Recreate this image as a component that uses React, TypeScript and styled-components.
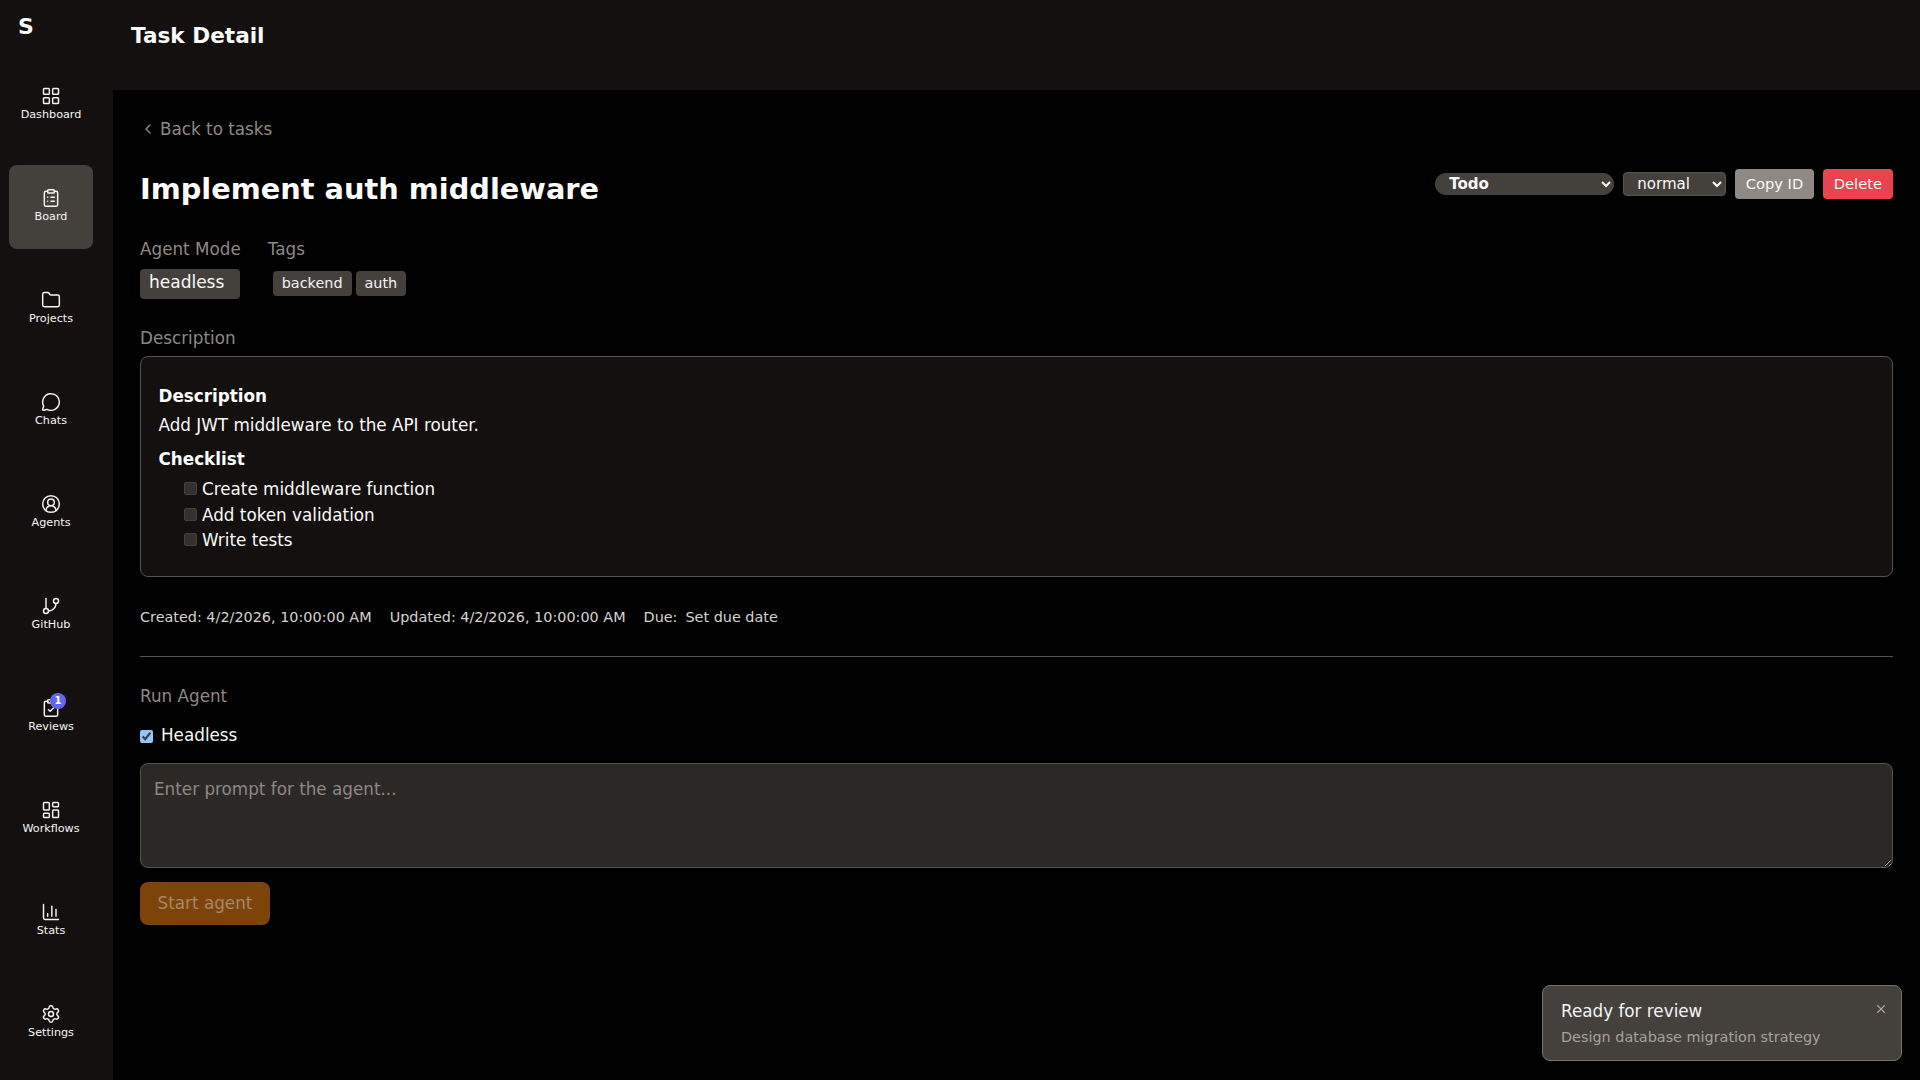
import React from 'react';
import styled, { createGlobalStyle } from 'styled-components';
import {
  LayoutGrid, ClipboardList, Folder, MessageCircle, CircleUserRound, GitBranch,
  ClipboardCheck, LayoutDashboard, ChartColumn, Settings, ChevronLeft, X,
} from 'lucide-react';

const Global = createGlobalStyle`
  html, body { margin: 0; padding: 0; height: 100%; background: #000; }
  body { font-family: "DejaVu Sans", sans-serif; color: #fafaf9; overflow: hidden; }
  * { box-sizing: border-box; }
`;

const Shell = styled.div`
  display: flex;
  height: 100vh;
`;
const Sidebar = styled.nav`
  width: 113px;
  flex: none;
  background: #141010;
  display: flex;
  flex-direction: column;
  padding-left: 9px;
`;
const Logo = styled.div`
  height: 63px;
  padding: 14px 0 0 9px;
  font-size: 22px;
  line-height: 26px;
  font-weight: 700;
`;
const NavList = styled.div`
  display: flex;
  flex-direction: column;
  gap: 18px;
`;
const NavItem = styled.a<{ $active?: boolean }>`
  position: relative;
  width: 84px;
  height: 84px;
  border-radius: 8px;
  display: flex;
  flex-direction: column;
  align-items: center;
  padding-top: 23px;
  background: ${p => (p.$active ? '#44403c' : 'transparent')};
  color: #f5f5f4;
  font-size: 11.2px;
  line-height: 14px;
  gap: 2px;
  svg { display: block; }
`;
const IconWrap = styled.span`
  position: relative;
  display: block;
  width: 20px;
  height: 20px;
`;
const Badge = styled.span`
  position: absolute;
  top: -5px;
  left: 9px;
  width: 16px;
  height: 16px;
  border-radius: 50%;
  background: #6366f1;
  color: #fff;
  font-size: 10px;
  font-weight: 700;
  line-height: 16px;
  text-align: center;
`;
const Column = styled.div`
  flex: 1;
  min-width: 0;
  display: flex;
  flex-direction: column;
`;
const Header = styled.header`
  height: 90px;
  flex: none;
  background: #141010;
  padding: 22px 0 0 18px;
  font-size: 21.6px;
  line-height: 28px;
  font-weight: 700;
`;
const Content = styled.main`
  flex: 1;
  background: #000;
  padding: 28px 27px 0;
`;
const BackLink = styled.a`
  display: flex;
  align-items: center;
  gap: 4px;
  height: 22px;
  color: #8f8986;
  font-size: 16.8px;
  line-height: 22px;
`;
const TitleRow = styled.div`
  display: flex;
  justify-content: space-between;
  align-items: flex-start;
  margin-top: 29px;
`;
const Title = styled.h1`
  margin: 0;
  font-size: 28.8px;
  line-height: 40px;
  font-weight: 700;
  color: #fff;
`;
const Actions = styled.div`
  display: flex;
  align-items: center;
  gap: 9px;
  height: 30px;
`;
const StatusSelect = styled.select`
  width: 179px;
  height: 22px;
  border: none;
  border-radius: 11px;
  background: #44403c;
  color: #fafaf9;
  font: 700 15.1px "DejaVu Sans", sans-serif;
  padding: 0 10px;
`;
const PrioritySelect = styled.select`
  width: 103px;
  height: 24px;
  border: 1px solid #57534e;
  border-radius: 4px;
  background: #44403c;
  color: #fafaf9;
  font: 15.1px "DejaVu Sans", sans-serif;
  padding: 0 9px;
`;
const ActionButton = styled.button<{ $danger?: boolean }>`
  height: 30px;
  padding: 0 ${p => (p.$danger ? '11px' : '10.5px')} 1px;
  border: none;
  border-radius: 4px;
  background: ${p => (p.$danger ? '#e94350' : '#8f8986')};
  color: #fafaf9;
  font: 14.7px "DejaVu Sans", sans-serif;
`;
const MetaRow = styled.div`
  display: flex;
  gap: 27px;
  margin-top: 29px;
`;
const Field = styled.div`
  display: flex;
  flex-direction: column;
`;
const FieldLabel = styled.div`
  color: #8f8986;
  font-size: 16.8px;
  line-height: 22px;
`;
const ModeBadge = styled.div`
  width: 100px;
  height: 30px;
  margin-top: 9px;
  padding-left: 9px;
  border-radius: 4px;
  background: #44403c;
  color: #fafaf9;
  font-size: 17px;
  line-height: 26px;
`;
const TagRow = styled.div`
  display: flex;
  gap: 4px;
  margin: 11px 0 0 5px;
`;
const Tag = styled.span`
  height: 25px;
  padding: 0 9px;
  border-radius: 4px;
  background: #44403c;
  color: #f5f5f4;
  font-size: 14.4px;
  line-height: 25px;
`;
const SectionLabel = styled(FieldLabel)`
  margin-top: 28px;
`;
const Card = styled.section`
  margin-top: 7px;
  height: 221px;
  padding: 26px 17.5px 0;
  border: 1px solid #57534e;
  border-radius: 8px;
  background: #141010;
`;
const CardHeading = styled.h3`
  margin: 0;
  font-size: 16.8px;
  line-height: 26px;
  font-weight: 700;
  color: #fff;
`;
const CardText = styled.p`
  margin: 3px 0 8px;
  font-size: 16.8px;
  line-height: 26px;
  color: #fafaf9;
`;
const Checklist = styled.ul`
  margin: 4.3px 0 0;
  padding: 0 0 0 25.5px;
  list-style: none;
`;
const CheckItem = styled.li`
  display: flex;
  align-items: center;
  gap: 5px;
  font-size: 16.8px;
  height: 25.5px;
  color: #fafaf9;
`;
const CheckBox = styled.span`
  width: 13px;
  height: 13px;
  margin-top: -1px;
  border-radius: 2px;
  background: #353130;
  border: 1px solid #44403c;
`;
const Timestamps = styled.div`
  display: flex;
  gap: 18px;
  margin-top: 30px;
  color: #d6d3d1;
  font-size: 14.4px;
  line-height: 20px;
`;
const DueValue = styled.span`
  margin-left: 8px;
`;
const Divider = styled.hr`
  margin: 29px 0 0;
  border: none;
  border-top: 1px solid #57534e;
`;
const RunLabel = styled(FieldLabel)`
  margin-top: 28px;
`;
const HeadlessRow = styled.label`
  display: flex;
  align-items: center;
  gap: 8px;
  margin-top: 17px;
  font-size: 16.8px;
  line-height: 22px;
  color: #fafaf9;
`;
const HeadlessBox = styled.input`
  width: 13px;
  height: 13px;
  margin: 2px 0 0;
  accent-color: #93c5fd;
`;
const Prompt = styled.textarea`
  display: block;
  width: 100%;
  height: 105px;
  margin-top: 17px;
  padding: 14px 13px;
  border: 1px solid #57534e;
  border-radius: 8px;
  background: #2c2826;
  color: #fafaf9;
  font: 16.8px/22px "DejaVu Sans", sans-serif;
  &::placeholder { color: #8f8986; }
`;
const StartButton = styled.button`
  display: block;
  width: 130px;
  height: 43px;
  margin-top: 14px;
  padding: 0 0 2px;
  border: none;
  border-radius: 8px;
  background: #7c4409;
  color: #a8866a;
  font: 16.8px "DejaVu Sans", sans-serif;
`;
const Toast = styled.aside`
  position: fixed;
  right: 18px;
  bottom: 19px;
  width: 360px;
  height: 76px;
  padding: 14px 18px;
  border: 1px solid #78716c;
  border-radius: 8px;
  background: #44403c;
`;
const ToastTitle = styled.div`
  font-size: 16.8px;
  line-height: 22px;
  color: #f5f5f4;
`;
const ToastText = styled.div`
  margin-top: 6px;
  font-size: 14.4px;
  line-height: 18px;
  color: #a8a29e;
`;
const ToastClose = styled.span`
  position: absolute;
  top: 16px;
  right: 13px;
  display: block;
  color: #a8a29e;
  line-height: 0;
`;

const navItems = [
  { label: 'Dashboard', Icon: LayoutGrid },
  { label: 'Board', Icon: ClipboardList, active: true },
  { label: 'Projects', Icon: Folder },
  { label: 'Chats', Icon: MessageCircle },
  { label: 'Agents', Icon: CircleUserRound },
  { label: 'GitHub', Icon: GitBranch },
  { label: 'Reviews', Icon: ClipboardCheck, badge: 1 },
  { label: 'Workflows', Icon: LayoutDashboard },
  { label: 'Stats', Icon: ChartColumn },
  { label: 'Settings', Icon: Settings },
];

export default function App() {
  return (
    <Shell>
      <Global />
      <Sidebar>
        <Logo>S</Logo>
        <NavList>
          {navItems.map(({ label, Icon, active, badge }) => (
            <NavItem key={label} $active={active}>
              <IconWrap>
                <Icon size={20} strokeWidth={1.75} />
                {badge ? <Badge>{badge}</Badge> : null}
              </IconWrap>
              {label}
            </NavItem>
          ))}
        </NavList>
      </Sidebar>
      <Column>
        <Header>Task Detail</Header>
        <Content>
          <BackLink><ChevronLeft size={16} />Back to tasks</BackLink>
          <TitleRow>
            <Title>Implement auth middleware</Title>
            <Actions>
              <StatusSelect defaultValue="Todo"><option>Todo</option></StatusSelect>
              <PrioritySelect defaultValue="normal"><option>normal</option></PrioritySelect>
              <ActionButton>Copy ID</ActionButton>
              <ActionButton $danger>Delete</ActionButton>
            </Actions>
          </TitleRow>
          <MetaRow>
            <Field>
              <FieldLabel>Agent Mode</FieldLabel>
              <ModeBadge>headless</ModeBadge>
            </Field>
            <Field>
              <FieldLabel>Tags</FieldLabel>
              <TagRow><Tag>backend</Tag><Tag>auth</Tag></TagRow>
            </Field>
          </MetaRow>
          <SectionLabel>Description</SectionLabel>
          <Card>
            <CardHeading>Description</CardHeading>
            <CardText>Add JWT middleware to the API router.</CardText>
            <CardHeading>Checklist</CardHeading>
            <Checklist>
              <CheckItem><CheckBox />Create middleware function</CheckItem>
              <CheckItem><CheckBox />Add token validation</CheckItem>
              <CheckItem><CheckBox />Write tests</CheckItem>
            </Checklist>
          </Card>
          <Timestamps>
            <span>Created: 4/2/2026, 10:00:00 AM</span>
            <span>Updated: 4/2/2026, 10:00:00 AM</span>
            <span>Due:<DueValue>Set due date</DueValue></span>
          </Timestamps>
          <Divider />
          <RunLabel>Run Agent</RunLabel>
          <HeadlessRow><HeadlessBox type="checkbox" defaultChecked />Headless</HeadlessRow>
          <Prompt placeholder="Enter prompt for the agent..." />
          <StartButton>Start agent</StartButton>
        </Content>
      </Column>
      <Toast>
        <ToastTitle>Ready for review</ToastTitle>
        <ToastText>Design database migration strategy</ToastText>
        <ToastClose><X size={14} /></ToastClose>
      </Toast>
    </Shell>
  );
}
